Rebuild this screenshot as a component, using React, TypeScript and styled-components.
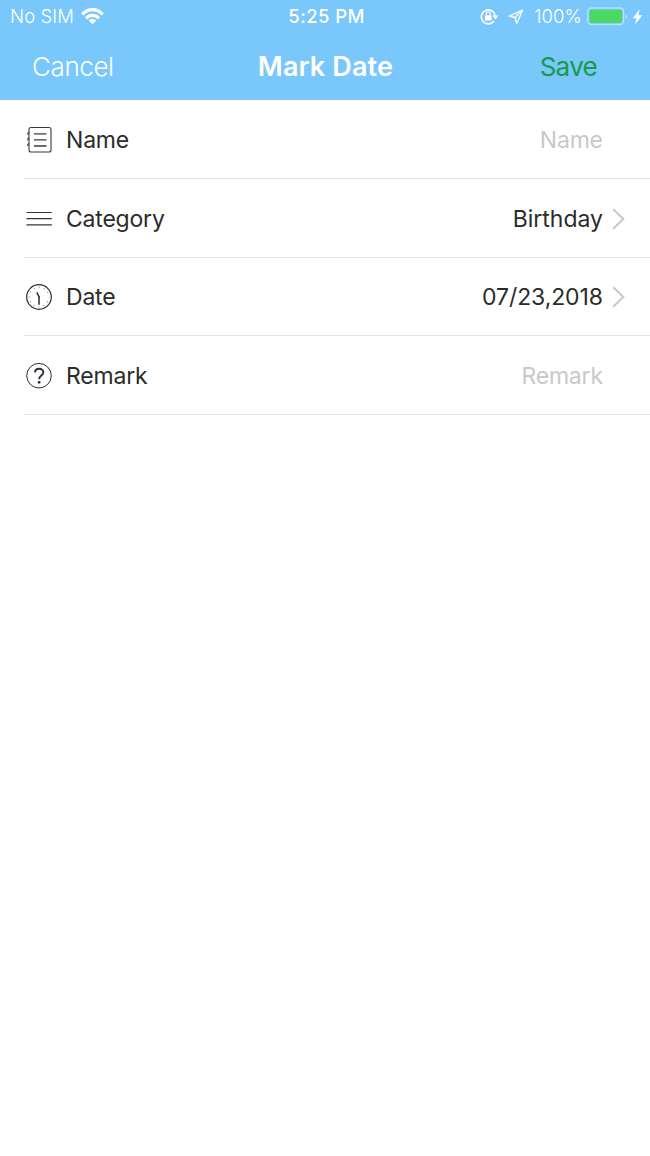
import React from "react";
import styled, { createGlobalStyle } from "styled-components";

const GlobalStyle = createGlobalStyle`
  * { box-sizing: border-box; }
  body {
    margin: 0;
    background: #fff;
    font-family: Inter, "Liberation Sans", sans-serif;
  }
`;

const Screen = styled.main`
  width: 650px;
  height: 1156px;
  background: #fff;
  overflow: hidden;
`;

const Header = styled.header`
  height: 100px;
  background: #79c7fb;
  color: #fff;
`;

const StatusBar = styled.div`
  height: 33px;
  display: grid;
  grid-template-columns: 1fr auto 1fr;
  align-items: center;
  padding: 0 7px 0 10px;
  font-size: 18.5px;
  line-height: 33px;
`;

const StatusSide = styled.div<{ $end?: boolean }>`
  display: flex;
  align-items: center;
  justify-content: ${(p) => (p.$end ? "flex-end" : "flex-start")};
`;

const StatusText = styled.span<{ $spacing: number; $weight?: number; $left?: number }>`
  margin-left: ${(p) => p.$left ?? 0}px;
  letter-spacing: ${(p) => p.$spacing}px;
  font-weight: ${(p) => p.$weight ?? 300};
  white-space: nowrap;
`;

const Glyph = styled.svg<{ $left?: number }>`
  display: block;
  flex: none;
  margin-left: ${(p) => p.$left ?? 0}px;
`;

const NavBar = styled.nav`
  height: 67px;
  display: grid;
  grid-template-columns: 1fr auto 1fr;
  align-items: center;
  padding: 0 53px 0 32px;
`;

const NavButton = styled.button<{ $color: string; $weight: number; $end?: boolean }>`
  justify-self: ${(p) => (p.$end ? "end" : "start")};
  border: 0;
  padding: 0;
  background: none;
  font: ${(p) => p.$weight} 26px/67px Inter, sans-serif;
  letter-spacing: ${(p) => (p.$end ? -0.7 : -0.4)}px;
  color: ${(p) => p.$color};
`;

const Title = styled.h1`
  margin: 0 0 0 22px;
  font-size: 27px;
  line-height: 67px;
  font-weight: 600;
  letter-spacing: 0.15px;
`;

const List = styled.section`
  padding: 0.5px 0 0 24px;
`;

const Row = styled.div`
  height: 78.5px;
  display: flex;
  align-items: center;
  padding: 2px 25px 0 2px;
  border-bottom: 1px solid #e4e4e6;
  font-size: 23px;
  line-height: 30px;
`;

const Label = styled.span`
  margin-left: 14px;
  color: #2b2b2b;
  letter-spacing: -0.2px;
`;

const Value = styled.span<{ $spacing: number; $muted?: boolean }>`
  margin-left: auto;
  margin-right: ${(p) => -p.$spacing}px;
  color: ${(p) => (p.$muted ? "#c8c8cd" : "#2b2b2b")};
  letter-spacing: ${(p) => p.$spacing}px;
`;

const Accessory = styled.span`
  width: 22px;
  display: flex;
  justify-content: flex-end;
`;

const WifiIcon = () => (
  <Glyph $left={7} width="23" height="17" viewBox="0 0 23 17" fill="none" stroke="#fff" strokeWidth="3.1">
    <path d="M1.3 6.4C7 0 16 0 21.7 6.4" />
    <path d="M5 10.3C8.8 6.4 14.2 6.4 18 10.3" />
    <path d="M11.5 16.2 7.7 12.4C9.9 10.4 13.1 10.4 15.3 12.4Z" fill="#fff" stroke="none" />
  </Glyph>
);

const RotationLockIcon = () => (
  <Glyph width="19" height="18" viewBox="0 0 19 18" fill="none" stroke="#fff">
    <path d="M14 13.1A7 7 0 1 1 15.3 7.8" strokeWidth="1.6" />
    <path d="M12.2 7.4H18.6L15.4 11.4Z" fill="#fff" stroke="none" />
    <rect x="5" y="7.2" width="6.6" height="5.4" rx=".6" fill="#fff" stroke="none" />
    <path d="M6.4 7.6V5.8a1.9 1.9 0 0 1 3.8 0V7.6" strokeWidth="1.2" />
  </Glyph>
);

const LocationIcon = () => (
  <Glyph $left={9} width="16" height="16" viewBox="0 0 16 16" fill="none" stroke="#fff" strokeWidth="1.3" strokeLinejoin="round">
    <path d="M14.6 1.1 1.2 7.1 7 8.5 8.8 14.5Z" />
    <path d="M14.6 1.1 7 8.5" strokeWidth="1.2" />
  </Glyph>
);

const BatteryIcon = () => (
  <Glyph $left={5} width="42" height="19" viewBox="0 0 42 19">
    <rect x="1" y="1" width="35.5" height="16.5" rx="3.5" fill="none" stroke="#b5e0fc" strokeWidth="1.5" />
    <rect x="2.5" y="2.7" width="32.4" height="13.2" rx="1.6" fill="#4bd964" />
    <path d="M38.6 7v4.8q1.7-.7 1.7-2.4T38.6 7" fill="#b5e0fc" />
  </Glyph>
);

const BoltIcon = () => (
  <Glyph $left={3} width="11" height="16" viewBox="0 0 11 16" fill="#fff">
    <path d="M7.6.3.8 9.2H4.5L3 15.6 10.4 6.2H6.3Z" />
  </Glyph>
);

const NotebookIcon = () => (
  <Glyph width="26" height="28" viewBox="0 0 26 28" fill="none" stroke="#383844" strokeWidth="1.1">
    <rect x="3" y="1.5" width="22" height="24.5" rx="2" />
    <path d="M8 7.8H20.5M8 13.8H20.5M8 20H20.5" strokeWidth="1.3" />
    <path d="M3 6.2Q.7 7.2 2.4 8.8M3 11.8Q.7 12.8 2.4 14.4M3 17.4Q.7 18.4 2.4 20" strokeWidth="1.1" />
  </Glyph>
);

const LinesIcon = () => (
  <Glyph width="26" height="28" viewBox="0 0 26 28" stroke="#343440" strokeWidth="1.2">
    <path d="M.5 7.5H25.8M.5 13.6H25.8M.5 19.8H25.8" />
  </Glyph>
);

const ClockIcon = () => (
  <Glyph width="26" height="28" viewBox="0 0 26 28" fill="none" stroke="#2c2c38">
    <circle cx="13" cy="14" r="12.3" strokeWidth="1.2" />
    <circle cx="13" cy="14" r="9.8" strokeWidth="1.2" strokeDasharray=".8 4.331" strokeDashoffset=".4" opacity=".65" />
    <path d="M10.8 9.4 13 13.6V21.8" strokeWidth="1.5" />
    <circle cx="13" cy="14" r=".8" fill="#2c2c38" stroke="none" />
  </Glyph>
);

const HelpIcon = () => (
  <Glyph width="26" height="28" viewBox="0 0 26 28" fill="none" stroke="#2c2c38">
    <circle cx="13" cy="13.7" r="12.3" strokeWidth="1" />
    <path d="M9 10.6C9 5.6 17.4 5.6 17.4 10.3C17.4 13.4 13.1 13.7 13.1 17.2" strokeWidth="1.9" />
    <circle cx="13.1" cy="20.3" r="1.4" fill="#2c2c38" stroke="none" />
  </Glyph>
);

const Chevron = () => (
  <Glyph width="13" height="22" viewBox="0 0 13 22" fill="none" stroke="#c7c7cc" strokeWidth="2">
    <path d="M1.2 1.2 11.4 11 1.2 20.8" />
  </Glyph>
);

interface Field {
  label: string;
  value: string;
  icon: React.ReactNode;
  valueSpacing: number;
  muted?: boolean;
}

const fields: Field[] = [
  { label: "Name", value: "Name", icon: <NotebookIcon />, valueSpacing: -0.2, muted: true },
  { label: "Category", value: "Birthday", icon: <LinesIcon />, valueSpacing: 0 },
  { label: "Date", value: "07/23,2018", icon: <ClockIcon />, valueSpacing: -0.1 },
  { label: "Remark", value: "Remark", icon: <HelpIcon />, valueSpacing: -0.2, muted: true },
];

export default function App() {
  return (
    <Screen>
      <GlobalStyle />
      <Header>
        <StatusBar>
          <StatusSide>
            <StatusText $spacing={0.1}>No SIM</StatusText>
            <WifiIcon />
          </StatusSide>
          <StatusText $spacing={0.4} $weight={500}>5:25 PM</StatusText>
          <StatusSide $end>
            <RotationLockIcon />
            <LocationIcon />
            <StatusText $spacing={0.1} $left={10}>100%</StatusText>
            <BatteryIcon />
            <BoltIcon />
          </StatusSide>
        </StatusBar>
        <NavBar>
          <NavButton $color="#fff" $weight={300}>Cancel</NavButton>
          <Title>Mark Date</Title>
          <NavButton $color="#169b48" $weight={400} $end>Save</NavButton>
        </NavBar>
      </Header>
      <List>
        {fields.map((f) => (
          <Row key={f.label}>
            {f.icon}
            <Label>{f.label}</Label>
            <Value $spacing={f.valueSpacing} $muted={f.muted}>{f.value}</Value>
            <Accessory>{!f.muted && <Chevron />}</Accessory>
          </Row>
        ))}
      </List>
    </Screen>
  );
}
